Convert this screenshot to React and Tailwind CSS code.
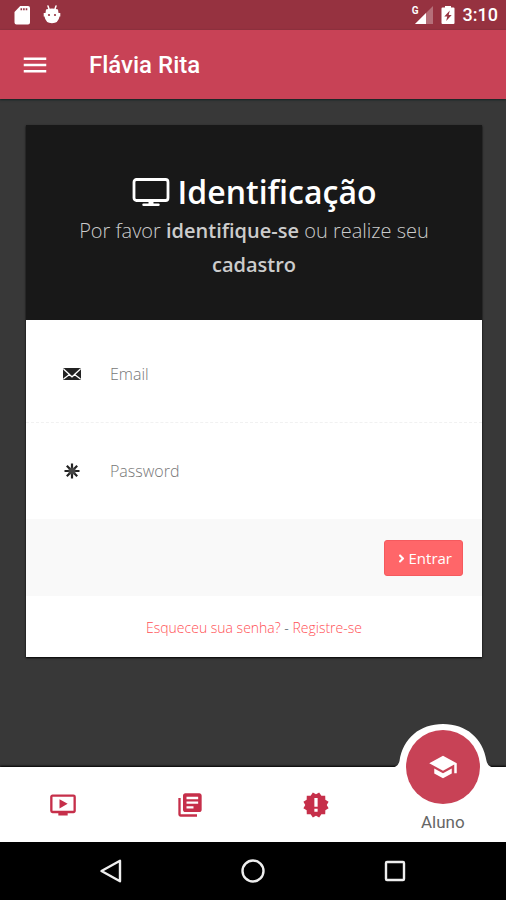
import React, { useState } from "react";
import { MdMenu, MdOndemandVideo, MdLibraryBooks, MdSchool } from "react-icons/md";
import { FaAngleRight } from "react-icons/fa";

// 12-point seal with an exclamation mark
const SealIcon = ({ className }) => (
    <svg viewBox="0 0 24 24" className={className}>
        <path
            d="M12 2.800L14.700 1.200L16.600 4L19.900 4.100L20 7.400L22.800 9.300L21.200 12L22.800 14.700L20 16.600L19.900 19.900L16.600 20L14.700 22.800L12 21.200L9.300 22.800L7.400 20L4.100 19.900L4 16.600L1.200 14.700L2.800 12L1.200 9.300L4 7.400L4.100 4.100L7.400 4L9.300 1.200z"
            fill="currentColor"
        />
        <path d="M10.600 6h2.800v7.500h-2.800zM10.600 15.200h2.800v2.600h-2.800z" fill="white" />
    </svg>
);

const tabs = [
    { id: "videos", label: "Vídeos", Icon: MdOndemandVideo },
    { id: "library", label: "Biblioteca", Icon: MdLibraryBooks },
    { id: "news", label: "Novidades", Icon: SealIcon },
];

const StatusBar = () => (
    <div className="flex h-[30px] items-center justify-between bg-[#963240] pr-2 pl-3 text-white">
        <div className="flex items-center gap-2">
            {/* SD card */}
            <svg viewBox="0 0 20 20" className="size-5" fill="currentColor">
                <path
                    fillRule="evenodd"
                    d="M8.2 1H16a2 2 0 0 1 2 2v14.500a2 2 0 0 1-2 2H4.500a2 2 0 0 1-2-2V7zM8.500 3.200v2h1.600v-2zm2.600 0v2h1.600v-2zm2.600 0v2h1.600v-2z"
                />
            </svg>
            {/* Android debug face */}
            <svg viewBox="0 0 20 20" className="ml-[2px] size-5">
                <path d="M6 1l1 3M14 1l-1 3" stroke="white" strokeWidth="1.500" strokeLinecap="round" />
                <path
                    d="M4 4.500Q10 2.500 16 4.500L16.500 8H18.300V11.500H17.500Q16.500 18.200 10 18.200T2.500 11.500H1.700V8H3.500z"
                    fill="white"
                />
                <circle cx="7" cy="10" r="1.100" fill="#963240" />
                <circle cx="13" cy="10" r="1.100" fill="#963240" />
            </svg>
        </div>
        <div className="flex items-center">
            <span className="mb-2 font-[Roboto] text-[10px] leading-none font-bold">G</span>
            <svg viewBox="0 0 18 18" className="mr-2 -ml-1 size-[18px]" fill="white">
                <path d="M0 18L18 0v18z" opacity="0.3" />
                <path d="M0 18L11 7v11z" />
            </svg>
            {/* Charging battery */}
            <svg viewBox="0 0 14 20" className="mr-2 h-5 w-[14px]" fill="white">
                <path
                    fillRule="evenodd"
                    d="M4 1h6v1.500h2.500q1 0 1 1v14.500q0 1-1 1h-11q-1 0-1-1v-14.500q0-1 1-1H4zM8.800 5.500L3.300 11.500H6.300L5.200 16L10.700 10H7.700z"
                />
            </svg>
            <span className="font-[Roboto] text-lg font-medium">3:10</span>
        </div>
    </div>
);

const LoginField = ({ id, type, label, value, onChange, children }) => (
    <div className="flex h-full items-center">
        <label htmlFor={id} aria-label={label} className="flex w-[84px] justify-center pl-2 text-[#222]">
            {children}
        </label>
        <input
            id={id}
            type={type}
            placeholder={label}
            value={value}
            onChange={onChange}
            className="h-12 min-w-0 flex-1 bg-transparent text-base font-light text-gray-700 placeholder:text-[#777] focus:outline-none"
        />
    </div>
);

const LoginCard = () => {
    const [form, setForm] = useState({ email: "", password: "" });

    const handleChange = (field) => (e) => {
        setForm((prev) => ({ ...prev, [field]: e.target.value }));
    };

    return (
        <form
            onSubmit={(e) => e.preventDefault()}
            className="bg-white font-['Open_Sans',sans-serif] shadow-[0_1px_2px_#000]"
        >
            <div className="bg-[#181818] px-10 pt-11 pb-[38px] text-center">
                <h1 className="flex items-center justify-center gap-2 text-[32px] leading-[45px] font-semibold text-white">
                    <svg viewBox="0 0 38 30" className="h-[30px] w-[38px]" fill="none" stroke="currentColor">
                        <rect x="2" y="2.500" width="34" height="21" rx="2.500" strokeWidth="2.800" />
                        <path d="M19 24v4" strokeWidth="5" />
                        <path d="M11.500 27.800h15" strokeWidth="2.400" strokeLinecap="round" />
                    </svg>
                    Identificação
                </h1>
                <p className="text-xl leading-[34px] font-light text-[#ccc]">
                    Por favor <strong className="font-semibold">identifique-se</strong> ou realize seu{" "}
                    <strong className="font-semibold">cadastro</strong>
                </p>
            </div>

            <div className="h-[103px] border-b border-dashed border-[#f1f1f1] pt-[6px]">
                <LoginField id="email" type="email" label="Email" value={form.email} onChange={handleChange("email")}>
                    <svg viewBox="0 0 18 12" className="h-3 w-[18px]">
                        <rect width="18" height="12" rx="1.500" fill="#222" />
                        <path
                            d="M.5 1l6 5.500-6 4.500M17.500 1l-6 5.500 6 4.500M6 6.200l3 2.600 3-2.600"
                            fill="none"
                            stroke="white"
                            strokeWidth="1.300"
                        />
                    </svg>
                </LoginField>
            </div>
            <div className="h-24">
                <LoginField
                    id="password"
                    type="password"
                    label="Password"
                    value={form.password}
                    onChange={handleChange("password")}
                >
                    <svg viewBox="0 0 16 16" className="size-4" stroke="currentColor" strokeWidth="2.200">
                        <path d="M8 .5v15M.5 8h15M2.800 2.800l10.400 10.400M13.200 2.800L2.800 13.200" />
                        <circle cx="8" cy="8" r="3.600" fill="#444" stroke="none" />
                    </svg>
                </LoginField>
            </div>

            <div className="flex justify-end bg-[#f9f9f9] px-[19px] pt-[21px] pb-5">
                <button
                    type="submit"
                    className="flex h-9 items-center gap-px rounded-[3px] border border-[#f55a5e] bg-[#ff6669] px-[10px] text-[15px] text-white"
                >
                    <FaAngleRight className="size-[13px]" />
                    Entrar
                </button>
            </div>

            <div className="pt-[21px] pb-[18px] text-center text-sm leading-[22px] font-light text-gray-600">
                <a href="#senha" className="text-[#ff5055]">Esqueceu sua senha?</a>
                {" - "}
                <a href="#registro" className="text-[#ff5055]">Registre-se</a>
            </div>
        </form>
    );
};

const TabBar = () => (
    <nav className="grid h-[75px] grid-cols-4 bg-white shadow-[0_-1px_2px_#000]">
        {tabs.map(({ id, label, Icon }) => (
            <a key={id} href={`#${id}`} aria-label={label} className="flex items-center justify-center text-[#c62f4a]">
                <Icon className="size-7" />
            </a>
        ))}
        <a href="#aluno" className="relative flex flex-col items-center justify-end pb-2">
            {/* Active tab bump rises above the bar */}
            <svg viewBox="0 0 108 88" className="absolute -top-11 h-[88px] w-[108px]">
                <path
                    d="M0 45Q9 45 10.500 38C14 15 31 1 54 1S94 15 97.500 38Q99 45 108 45V88H0z"
                    fill="white"
                />
                <circle cx="54" cy="44" r="37" fill="#c84256" />
            </svg>
            <MdSchool className="absolute -top-[15px] size-[30px] text-white" />
            <span className="relative font-[Roboto] text-[17px] leading-6 text-[#666]">Aluno</span>
        </a>
    </nav>
);

const SystemBar = () => (
    <div className="flex h-[58px] items-center justify-center gap-[118px] bg-black text-[#eee]">
        <button aria-label="Voltar">
            <svg viewBox="0 0 24 24" className="size-6" fill="none" stroke="currentColor" strokeWidth="2.400">
                <path d="M21 1.800v20.400L2.500 12z" strokeLinejoin="round" />
            </svg>
        </button>
        <button aria-label="Início">
            <svg viewBox="0 0 24 24" className="size-6" fill="none" stroke="currentColor" strokeWidth="2.400">
                <circle cx="12" cy="12" r="10.500" />
            </svg>
        </button>
        <button aria-label="Recentes">
            <svg viewBox="0 0 24 24" className="size-6" fill="none" stroke="currentColor" strokeWidth="2.400">
                <rect x="3" y="3" width="18" height="18" rx="1" />
            </svg>
        </button>
    </div>
);

const App = () => {
    return (
        <div className="flex min-h-screen flex-col bg-[#383838]">
            <StatusBar />
            <header className="flex h-[69px] items-center bg-[#c84256] px-5 text-white shadow-[0_1px_2px_#122]">
                <button aria-label="Menu">
                    <MdMenu className="size-[30px]" />
                </button>
                <span className="ml-[39px] font-[Roboto] text-2xl font-medium">Flávia Rita</span>
            </header>
            <main className="flex-1 pt-[26px] pr-6 pb-10 pl-[26px]">
                <LoginCard />
            </main>
            <TabBar />
            <SystemBar />
        </div>
    );
};

export default App;
